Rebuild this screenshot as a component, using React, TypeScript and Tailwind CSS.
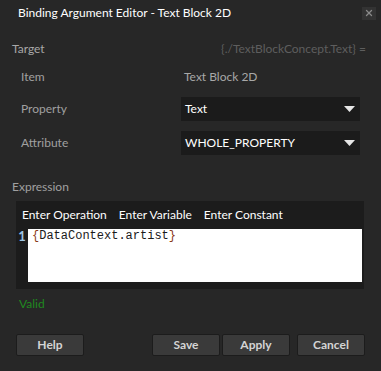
import { X } from "lucide-react";

function Select({ value }: { value: string }) {
  return (
    <div className="w-[179px] h-[24px] bg-[#1b1b1b] flex items-center justify-between pl-[4px] pr-[5px]">
      <span className="text-white text-[12px]">{value}</span>
      <svg width="11" height="6" viewBox="0 0 11 6">
        <polygon points="0,0 11,0 5.5,6" fill="#e6e6e6" />
      </svg>
    </div>
  );
}

function Button({ label }: { label: string }) {
  return (
    <button className="w-[68px] h-[22px] bg-[#3a3a3a] border border-[#1c1c1c] rounded-[2px] text-[#d4d4d4] text-[12px] font-bold flex items-center justify-center">
      {label}
    </button>
  );
}

export default function App() {
  return (
    <div
      className="w-[381px] h-[371px] bg-[#272727] flex flex-col"
      style={{ fontFamily: 'Lato, "Noto Sans", sans-serif' }}
    >
      <div className="h-[26px] flex items-center justify-between pl-[18px] pr-[5px]">
        <span className="text-white text-[12px]">Binding Argument Editor - Text Block 2D</span>
        <div className="w-[14px] h-[13px] bg-[#333333] flex items-center justify-center">
          <X size={10} strokeWidth={3} className="text-[#8a8a8a]" />
        </div>
      </div>

      <div className="mt-[14px] h-[18px] flex items-center justify-between pl-[12px] pr-[15px] text-[12px]">
        <span className="text-[#a8a8a8]">Target</span>
        <span className="text-[#5e5e5e]">{"{./TextBlockConcept.Text} ="}</span>
      </div>

      <div className="pl-[21px] mt-[9px] flex flex-col gap-[10px] text-[12px]">
        <div className="h-[20px] flex items-center">
          <span className="w-[163px] text-[#a0a0a0]">Item</span>
          <span className="text-[#a8a8a8]">Text Block 2D</span>
        </div>
        <div className="flex items-center">
          <span className="w-[160px] text-[#a0a0a0]">Property</span>
          <Select value="Text" />
        </div>
        <div className="flex items-center">
          <span className="w-[160px] text-[#a0a0a0]">Attribute</span>
          <Select value="WHOLE_PROPERTY" />
        </div>
      </div>

      <div className="mt-[23px] pl-[12px] h-[18px] flex items-center text-[12px] text-[#a0a0a0]">
        Expression
      </div>

      <div className="mt-[5px] ml-[16px] w-[348px] h-[88px] bg-[#1c1c1c] flex flex-col">
        <div className="h-[28px] flex items-center gap-[12px] pl-[6px] text-[12px] text-white">
          <span>Enter Operation</span>
          <span>Enter Variable</span>
          <span>Enter Constant</span>
        </div>
        <div className="flex pr-[2px]">
          <span className="w-[12px] text-center text-[#9cc4e4] text-[13px] font-bold leading-[14px]">
            1
          </span>
          <div
            className="flex-1 h-[53px] bg-white pl-[4px] text-[12px] leading-[14px] text-[#1a1a1a]"
            style={{ fontFamily: '"Liberation Mono", monospace' }}
          >
            <span className="text-[#8b3a1a]">{"{"}</span>
            DataContext.artist
            <span className="text-[#8b3a1a]">{"}"}</span>
          </div>
        </div>
      </div>

      <div className="mt-[7px] pl-[19px] h-[16px] flex items-center text-[12px] text-[#1f8a1f]">
        Valid
      </div>

      <div className="mt-[22px] pl-[16px] pr-[16px] flex items-center">
        <Button label="Help" />
        <div className="ml-auto flex items-center">
          <Button label="Save" />
          <div className="w-[2px]" />
          <Button label="Apply" />
          <div className="w-[7px]" />
          <Button label="Cancel" />
        </div>
      </div>
    </div>
  );
}
